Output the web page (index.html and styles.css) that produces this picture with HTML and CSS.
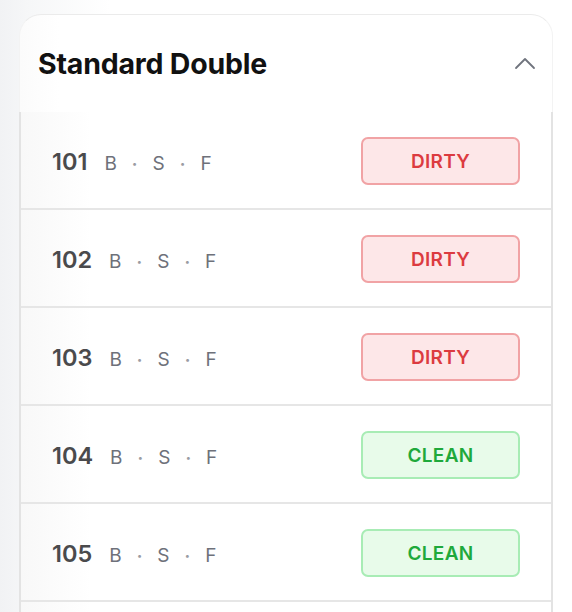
FILE: index.html
```html
<!DOCTYPE html>
<html>
<head>
<meta charset="utf-8">
<link rel="stylesheet" href="styles.css">
</head>
<body>
<div class="card">
  <div class="header">
    <h2 class="title">Standard Double</h2>
    <svg class="chev" width="22" height="14" viewBox="0 0 22 14"><polyline points="2,12 11,3 20,12" fill="none" stroke="#70747e" stroke-width="1.8" stroke-linecap="round" stroke-linejoin="round"/></svg>
  </div>
  <div class="list">
    <div class="row"><div class="info"><span class="num">101</span><span class="codes">B<i>·</i>S<i>·</i>F</span></div><span class="badge dirty">DIRTY</span></div>
    <div class="row"><div class="info"><span class="num">102</span><span class="codes">B<i>·</i>S<i>·</i>F</span></div><span class="badge dirty">DIRTY</span></div>
    <div class="row"><div class="info"><span class="num">103</span><span class="codes">B<i>·</i>S<i>·</i>F</span></div><span class="badge dirty">DIRTY</span></div>
    <div class="row"><div class="info"><span class="num">104</span><span class="codes">B<i>·</i>S<i>·</i>F</span></div><span class="badge clean">CLEAN</span></div>
    <div class="row"><div class="info"><span class="num">105</span><span class="codes">B<i>·</i>S<i>·</i>F</span></div><span class="badge clean">CLEAN</span></div>
    <div class="row"></div>
  </div>
</div>
</body>
</html>
```
FILE: styles.css
```css
html, body {
  margin: 0;
  padding: 0;
}
body {
  font-family: Inter, "Noto Sans", sans-serif;
  background: linear-gradient(to right, #f1f2f4 0px, #f6f7f8 30px, #ffffff 110px);
  height: 612px;
  overflow: hidden;
}
.card {
  margin: 14px 0 0 19px;
  width: 534px;
}
.header {
  height: 98px;
  box-sizing: border-box;
  background: linear-gradient(to right, #fbfbfb 0px, #ffffff 40px);
  border: 1px solid #ebebeb;
  border-left-color: #f3f3f3;
  border-right-color: #f3f3f3;
  border-bottom: none;
  border-radius: 22px 22px 0 0;
  display: flex;
  align-items: center;
  justify-content: space-between;
  padding: 0 16px 0 18px;
}
.title {
  margin: 0;
  font-size: 28.5px;
  font-weight: 700;
  color: #111111;
  letter-spacing: -0.2px;
}
.chev {
  display: block;
  margin-top: -2px;
}
.list {
  border-left: 2px solid #e3e3e3;
  border-right: 2px solid #e3e3e3;
  background: linear-gradient(to right, #f8f8f8 0px, #ffffff 70px);
}
.row {
  height: 96px;
  border-bottom: 2px solid #e6e6e6;
  display: flex;
  align-items: center;
  justify-content: space-between;
  padding: 0 31px;
}
.info {
  display: flex;
  align-items: baseline;
  gap: 17px;
  padding-top: 2px;
}
.num {
  font-size: 23.5px;
  font-weight: 600;
  color: #4a4a4c;
}
.codes {
  font-size: 19px;
  color: #6e717a;
  display: flex;
  align-items: baseline;
}
.codes i {
  font-style: normal;
  color: #9a9ca3;
  margin: 0 15px;
  font-size: 17px;
  font-weight: 700;
}
.badge {
  width: 159px;
  height: 48px;
  box-sizing: border-box;
  border-radius: 7px;
  display: flex;
  align-items: center;
  justify-content: center;
  font-size: 19px;
  font-weight: 600;
  letter-spacing: 0.3px;
  margin-top: 2px;
}
.dirty {
  background: #fde7e8;
  border: 2px solid #f1a3a5;
  color: #dc3b40;
}
.clean {
  background: #e8fbea;
  border: 2px solid #a8ecb5;
  color: #1fa93b;
}
```
